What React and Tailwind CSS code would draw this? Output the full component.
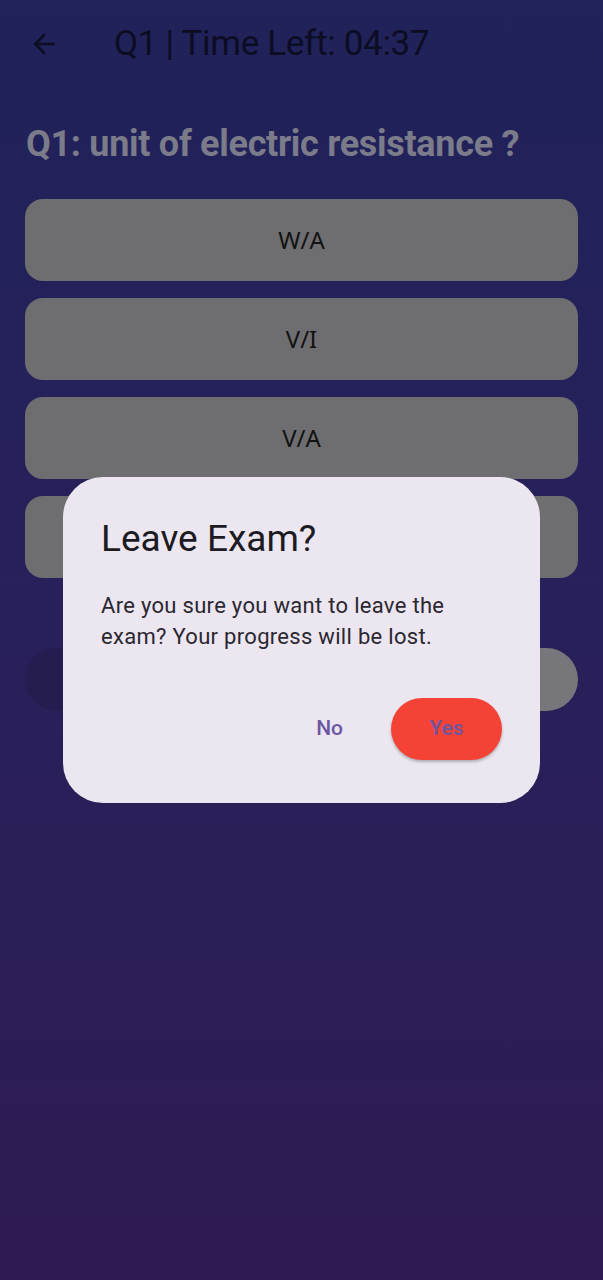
import React from "react";

// the fourth answer is hidden behind the dialog in the picture
const options = ["W/A", "V/I", "V/A", ""];

function BackArrow() {
  return (
    <svg width="32" height="32" viewBox="0 0 24 24" className="text-[#0d0e22]">
      <path d="M20 11H7.83l5.59-5.59L12 4l-8 8 8 8 1.41-1.41L7.83 13H20v-2z" fill="currentColor" />
    </svg>
  );
}

export default function App() {
  return (
    <div className="relative w-[603px] h-[1280px] overflow-hidden bg-gradient-to-b from-[#20225a] via-[#28205a] to-[#2f1b53] font-['Roboto',sans-serif]">
      <div className="flex items-center h-[88px] pl-[28px]">
        <BackArrow />
        <h1 className="ml-[54px] text-[35px] text-[#0c0d22] tracking-[-0.3px]">Q1 | Time Left: 04:37</h1>
      </div>

      <div className="px-[25px] pt-[36px]">
        <h2 className="text-[36px] font-bold text-[#7b7b8a] leading-[40px] pl-px tracking-[-0.3px]">Q1: unit of electric resistance ?</h2>

        <div className="mt-[35px] flex flex-col gap-[17px]">
          {options.map((o, i) => (
            <div key={i} className="h-[82px] rounded-[18px] bg-[#6e6e70] flex items-center justify-center text-[24px] text-[#121212] font-['Noto_Sans',sans-serif]">
              {o}
            </div>
          ))}
        </div>

        <div className="mt-[70px] flex justify-between">
          <div className="h-[63px] w-[200px] rounded-full bg-[#251d4f]" />
          <div className="h-[63px] w-[200px] rounded-full bg-[#77767b]" />
        </div>
      </div>

      <div className="absolute left-[63px] top-[477px] w-[477px] h-[326px] rounded-[40px] bg-[#ebe6ef] pl-[38px] pr-[38px] pt-[40px] flex flex-col">
        <h3 className="text-[37px] leading-[44px] text-[#1c1a22]">Leave Exam?</h3>
        <p className="mt-[29px] max-w-[370px] text-[22px] leading-[31px] tracking-[0.3px] text-[#2a2730]">
          Are you sure you want to leave the exam? Your progress will be lost.
        </p>
        <div className="mt-[46px] flex justify-end items-center">
          <button className="text-[21px] font-medium text-[#6b56a3] px-[14px]">No</button>
          <button className="ml-[34px] w-[111px] h-[62px] rounded-full bg-[#f44336] text-[21px] font-medium text-[#6b56a3] shadow-[0_2px_3px_rgba(0,0,0,0.25)]">Yes</button>
        </div>
      </div>
    </div>
  );
}
